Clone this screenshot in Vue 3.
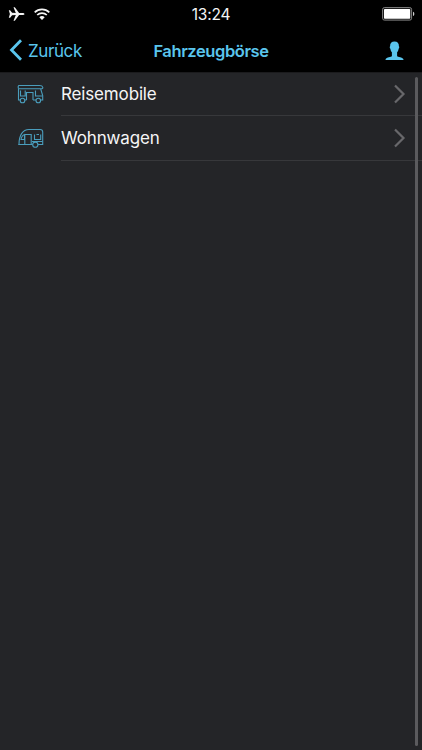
<script setup>
const items = [
  { id: 'motorhome', label: 'Reisemobile' },
  { id: 'caravan', label: 'Wohnwagen' }
]
</script>

<template>
  <main class="screen">
    <div class="status">
      <div class="signals">
        <svg width="17" height="14" viewBox="0 0 17 14">
          <path d="M.8 3.200h1.300l2 2.600 3.700.2L5.500.2h1.300l4.300 5.700h3.200c1.300 0 2.200.5 2.200 1.100s-.9 1.100-2.200 1.100h-3.200l-4.300 5.700H5.500L7.800 8l-3.700.2-2 2.600H.8L1.900 7z" fill="#f4f4f4" />
        </svg>
        <svg width="16" height="12" viewBox="0 0 16 12" fill="none" stroke="#f4f4f4" stroke-width="1.700">
          <path d="M.7 4.300a10.400 10.400 0 0 1 14.600 0M3.200 7a6.900 6.900 0 0 1 9.600 0" />
          <path d="M5.300 9.200a3.900 3.900 0 0 1 5.400 0L8 12z" fill="#f4f4f4" stroke="none" />
        </svg>
      </div>
      <span class="time">13:24</span>
      <svg class="battery" width="33" height="14" viewBox="0 0 33 14">
        <rect x=".6" y=".6" width="29" height="12.500" rx="1.800" fill="#111" stroke="#858585" />
        <rect x="2" y="2" width="26.200" height="9.700" rx=".7" fill="#fff" />
        <path d="M31 4.700c1.800.5 1.800 3.800 0 4.300z" fill="#ccc" />
      </svg>
    </div>
    <header class="nav">
      <div class="back">
        <svg width="13" height="22" viewBox="0 0 13 22" fill="none" stroke="#5ac5ed" stroke-width="2.800">
          <path d="M12 1.300 2.500 11l9.500 9.700" />
        </svg>
        <span class="back-label">Zurück</span>
      </div>
      <h1>Fahrzeugbörse</h1>
      <svg class="person" width="19" height="20" viewBox="0 0 19 20">
        <path d="M9.500.5c2.900 0 4.600 1.600 4.400 4.700.6.400.4 2-.3 2.500-.2 1.800-.9 2.800-1.500 3.500v3.800c.5 1.300 5.500 1.100 6.200 3.100l.2 1H.5l.2-1c.7-2 5.700-1.800 6.200-3.100v-3.800c-.6-.7-1.300-1.700-1.500-3.500-.7-.5-.9-2.100-.3-2.500C4.900 2.100 6.600.5 9.500.5z" fill="#5ac5ed" />
      </svg>
    </header>
    <section class="content">
      <ul>
        <li v-for="item in items" :key="item.id">
          <div class="icon">
            <svg v-if="item.id === 'motorhome'" width="28" height="20" viewBox="0 0 28 20" fill="none" stroke="#4a9dbc" stroke-width="1.100">
              <path d="M3.300 16H1.500V4.500M7.500 16h2M16 16h3M23.500 16h2.200v-4.500l-2-6.500" />
              <path d="M1.500 4.500c-.6-1.500-.3-3 .5-3h20.500c1.800 0 3 .7 3.300 1.800.2.900-.5 1.400-1.500 1.400H1.500" />
              <path d="M3.500 6.500v5.500h4.700V6.500M9.500 16V8.500h6.500V16M18.500 6.500v5.500h6.800" />
              <circle cx="5.500" cy="16.500" r="2.300" />
              <circle cx="21.300" cy="16.500" r="2.300" />
            </svg>
            <svg v-else width="28" height="20" viewBox="0 0 28 20" fill="none" stroke="#4a9dbc" stroke-width="1.100">
              <path d="M15.700 16.500H1.200M2 16.500C2 7.500 5.500 1.500 12 1.500h11.200c1.500 0 2.500.8 2.500 2.500v12.500h-4.800" />
              <path d="M4 11.500h3.500V6.500C5.800 7 4.500 9 4 11.500zM7.800 16.500v-10h6.400v10M17.500 6.500v5h6.200v-5M19.500 6.500h2.500M15 13.500h10.500" />
              <circle cx="18.300" cy="16.700" r="2.600" fill="#242528" />
            </svg>
          </div>
          <div class="entry">
            <span class="label">{{ item.label }}</span>
            <svg width="13" height="20" viewBox="0 0 13 20" fill="none" stroke="#68686b" stroke-width="2.200">
              <path d="m2 1.500 8.500 8.500L2 18.500" />
            </svg>
          </div>
        </li>
      </ul>
      <div class="scrollbar"></div>
    </section>
  </main>
</template>

<style>
body { margin: 0; background: #242528; }
</style>

<style scoped>
.screen {
  width: 422px;
  height: 750px;
  display: flex;
  flex-direction: column;
  overflow: hidden;
  background: #242528;
  font-family: Inter, "Liberation Sans", sans-serif;
  color: #f5f5f6;
}
svg { display: block; flex: none; }
.status, .nav {
  display: grid;
  grid-template-columns: 1fr auto 1fr;
  align-items: center;
  background: #000;
  box-sizing: border-box;
}
.status { height: 28px; padding: 0 7px 0 8px; }
.signals { display: flex; align-items: center; gap: 8.500px; }
.signals svg:last-child { margin-top: -1px; }
.time { font-size: 15.500px; letter-spacing: -0.200px; line-height: 20px; margin-left: -1px; padding-top: 1px; }
.battery { justify-self: end; }
.nav {
  height: 45px;
  padding: 1px 18px 0;
  border-bottom: 1px solid #1b1b1d;
  color: #5ac5ed;
}
.back { display: flex; align-items: center; gap: 6px; margin-left: -9px; }
.back svg { margin-top: -1px; }
.back-label { font-size: 17px; letter-spacing: -0.400px; }
h1 { margin: 0; font-size: 16.500px; font-weight: 600; letter-spacing: -0.400px; }
.person { justify-self: end; }
.content { display: flex; flex: 1; position: relative; }
ul { flex: 1; margin: 0; padding: 0; list-style: none; }
li { display: flex; height: 45px; }
li:first-child { height: 43px; }
.icon { width: 44px; padding: 0 0 2px 17px; display: flex; align-items: center; }
.entry {
  flex: 1;
  display: flex;
  align-items: center;
  justify-content: space-between;
  padding: 0 16px 1px 0;
  border-bottom: 1px solid #37383b;
}
.label { font-size: 17px; letter-spacing: -0.150px; }
.scrollbar {
  position: absolute;
  top: 4px;
  right: 4px;
  bottom: 4px;
  width: 3px;
  border-radius: 2px;
  background: #5b5b5e;
}
</style>
